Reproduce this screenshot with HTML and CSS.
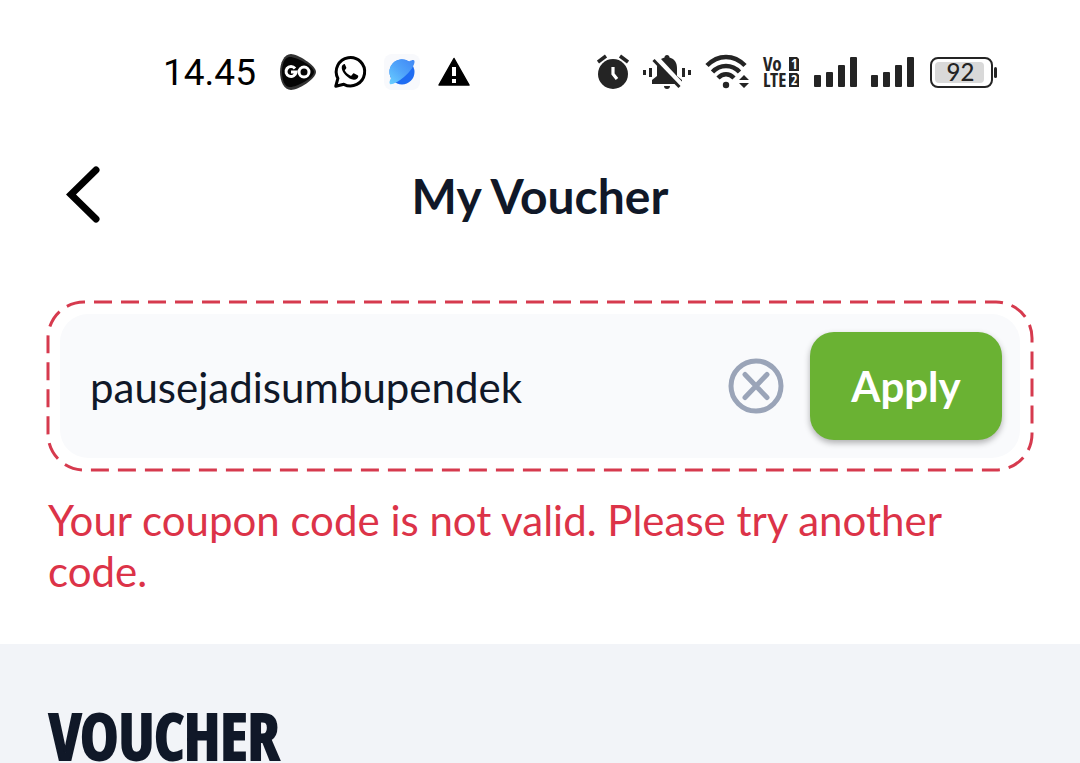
FILE: index.html
```html
<!DOCTYPE html>
<html lang="en">
<head>
  <meta charset="UTF-8">
  <title>My Voucher</title>
  <meta name="viewport" content="width=device-width, initial-scale=1.0">
  <link rel="stylesheet" href="styles.css">
</head>
<body>

  <div class="status-bar">
    <span class="clock">14.45</span>
    <div class="notifications">
      <svg width="36" height="36" viewBox="0 0 36 36">
        <path d="M11 0C17 0 36 11 36 18S18 36 11 36C4 36 0 27 0 18S4 0 11 0Z" fill="#333"/>
        <path d="M9 3C15 2 34 12 34 18S17 33 10 33C4 33 2 25 2 18S4 4 9 3Z" fill="#050505"/>
        <g fill="none" stroke="#fff" stroke-width="3">
          <path d="M15 14.500A5 5 0 1 0 16 18H11"/>
          <circle cx="24" cy="18" r="5"/>
        </g>
      </svg>
      <svg width="36" height="36" viewBox="-1 -1 38 38">
        <path d="M3 33l2.200-8.300A15 15 0 1 1 11.500 31z" fill="none" stroke="#000" stroke-width="3.200" stroke-linejoin="round"/>
        <path d="M12 9.500c-1.500.2-3 2-2.700 4.500.5 5 7 11.500 12.700 12.200 2.500.2 4.500-1.500 4.700-3.400.1-.9-.1-1.200-.7-1.500l-3.500-1.700c-.7-.3-1.100-.2-1.600.4l-1.300 1.600c-.4.5-.8.5-1.400.2-2.400-1.100-4.200-2.700-5.500-5-.3-.5-.2-.8.2-1.300l1-1.300c.3-.4.3-.7.1-1.200l-1.300-3c-.2-.5-.4-.6-.7-.5z" fill="#000"/>
      </svg>
      <svg width="36" height="36" viewBox="0 0 36 36">
        <defs>
          <linearGradient id="sky" x1="0" y1="1" x2="1" y2="0">
            <stop offset="0" stop-color="#6ad0ff"/>
            <stop offset=".5" stop-color="#50a4fa"/>
            <stop offset="1" stop-color="#3f86f5"/>
          </linearGradient>
        </defs>
        <rect width="36" height="36" rx="8" fill="#f8f9fc"/>
        <circle cx="18" cy="18" r="12.500" fill="#1f6cf2"/>
        <path d="M7 24A12.500 12.500 0 0 1 25 7.500C28 6 30 5.500 30.500 7 31 11 26 18 20 23 14 28 8 31 6 30 5 29 5.500 27 7 24Z" fill="url(#sky)"/>
      </svg>
      <svg width="36" height="36" viewBox="0 0 36 36">
        <path d="M18 4.500L33 31H3Z" fill="#000" stroke="#000" stroke-width="1.500" stroke-linejoin="round"/>
        <path d="M16 13h4v9h-4zM16 25h4v4h-4z" fill="#fff"/>
      </svg>
    </div>

    <div class="system">
      <svg width="32" height="36" viewBox="0 0 32 36">
        <circle cx="16" cy="20" r="15" fill="#242424"/>
        <path d="M1 8l8-6M31 8l-8-6" stroke="#242424" stroke-width="3.500"/>
        <path d="M16 13v7l4 5" fill="none" stroke="#fff" stroke-width="3.200"/>
      </svg>
      <svg width="48" height="36" viewBox="0 0 48 36">
        <path d="M24 1c1.500 0 2.500 1 2.500 2.500C32 5 34 9 34 14v8l5 4v4H9v-4l5-4v-8c0-5 2-9 7.500-10.500C21.500 2 22.500 1 24 1z" fill="#242424"/>
        <path d="M21 32h6c0 2-1.200 3-3 3s-3-1-3-3z" fill="#242424"/>
        <path d="M13 4l26 28" stroke="#fff" stroke-width="6"/>
        <path d="M10.500 6l26 27" stroke="#242424" stroke-width="3"/>
        <path d="M1.500 16v5M7.500 14v9M40.500 14v9M46.500 16v5" stroke="#242424" stroke-width="3"/>
      </svg>
      <svg width="44" height="36" viewBox="0 0 44 36">
        <g fill="none" stroke="#242424" stroke-width="4.500">
          <path d="M2 11.500C13 0 29 0 40 11.500"/>
          <path d="M7.500 18C15 10 27 10 34.500 18"/>
          <path d="M13 24C18 19 24 19 29 24"/>
        </g>
        <circle cx="21" cy="31" r="3.200" fill="#242424"/>
        <path d="M34 26l5-5 5 5zM34 29h10l-5 5z" fill="#242424"/>
      </svg>
      <svg class="volte" width="37" height="36" viewBox="0 0 37 36">
        <text x="0" y="17">Vo</text>
        <text x="0" y="33">LTE</text>
        <path d="M26 3h8l2 2v12H26zM26 19h8l2 2v12H26z" fill="#242424"/>
        <text class="sim" x="28" y="15">1</text>
        <text class="sim" x="28" y="31">2</text>
      </svg>
      <svg width="43" height="36" viewBox="0 0 43 36">
        <g fill="#242424">
          <rect x="0" y="21" width="7" height="12" rx="1"/>
          <rect x="12" y="18" width="7" height="15" rx="1"/>
          <rect x="24" y="11" width="7" height="22" rx="1"/>
          <rect x="36" y="3" width="7" height="30" rx="1"/>
        </g>
      </svg>
      <svg width="43" height="36" viewBox="0 0 43 36">
        <g fill="#242424">
          <rect x="0" y="21" width="7" height="12" rx="1"/>
          <rect x="12" y="18" width="7" height="15" rx="1"/>
          <rect x="24" y="11" width="7" height="22" rx="1"/>
          <rect x="36" y="3" width="7" height="30" rx="1"/>
        </g>
      </svg>
      <div class="battery"><span class="battery-level">92</span></div>
    </div>
  </div>

  <header class="header">
    <button class="back" type="button" aria-label="Back">
      <svg width="36" height="60" viewBox="0 0 36 60">
        <path d="M30 5L5 29.500 30 54" fill="none" stroke="#000" stroke-width="7" stroke-linecap="round"/>
      </svg>
    </button>
    <h1 class="title">My Voucher</h1>
  </header>

  <main>
    <form class="coupon">
      <div class="coupon-box">
        <svg class="dashes"><rect width="100%" height="100%" rx="36"/></svg>
        <div class="coupon-field">
          <input class="code" type="text" value="pausejadisumbupendek" aria-label="Coupon code" spellcheck="false">
          <button class="clear" type="button" aria-label="Clear">
            <svg width="56" height="56" viewBox="0 0 56 56">
              <g fill="none" stroke="#9aa4b8" stroke-width="5" stroke-linecap="round">
                <circle cx="28" cy="28" r="25"/>
                <path d="M17 16.500l22 23M39 16.500l-22 23"/>
              </g>
            </svg>
          </button>
          <button class="apply" type="submit">Apply</button>
        </div>
      </div>
      <p class="error">Your coupon code is not valid. Please try another code.</p>
    </form>

    <section class="vouchers">
      <h2 class="section-title">VOUCHER</h2>
    </section>
  </main>

</body>
</html>
```
FILE: styles.css
```css
* {
  box-sizing: border-box;
}

body {
  margin: 0;
  min-height: 100vh;
  display: flex;
  flex-direction: column;
  background: #ffffff;
  color: #101828;
  font-family: Lato, sans-serif;
}

svg {
  display: block;
  flex-shrink: 0;
}

button {
  border: none;
  background: none;
  padding: 0;
  font-family: inherit;
  cursor: pointer;
}

main {
  flex: 1;
  display: flex;
  flex-direction: column;
}

.status-bar {
  display: flex;
  align-items: center;
  height: 144px;
  padding: 0 83px 0 163px;
}

.clock {
  font-family: Roboto, sans-serif;
  font-size: 37px;
  color: #000000;
}

.notifications {
  display: flex;
  gap: 16px;
  margin-left: 24px;
}

.system {
  display: flex;
  align-items: center;
  gap: 14px;
  margin-left: auto;
}

.volte {
  overflow: visible;
  font: bold 19px "Open Sans Condensed", "Roboto Condensed", sans-serif;
  fill: #242424;
}

.sim {
  font-size: 14px;
  fill: #ffffff;
}

.battery {
  position: relative;
  width: 63px;
  height: 31px;
  margin: 0 4px 0 2px;
  padding: 3px;
  border: 2px solid #242424;
  border-radius: 8px;
}

.battery::after {
  content: "";
  position: absolute;
  top: 8px;
  right: -6px;
  width: 3px;
  height: 11px;
  border-radius: 2px;
  background: #242424;
}

.battery-level {
  display: block;
  width: 49px;
  height: 21px;
  padding-left: 2px;
  border-radius: 4px;
  background: #d9d9d9;
  color: #242424;
  font-size: 24px;
  font-weight: 500;
  line-height: 20px;
  text-align: center;
}

.header {
  display: grid;
  grid-template-columns: 48px 1fr 48px;
  align-items: center;
  height: 101px;
  padding: 0 66px;
}

.title {
  margin: 0;
  padding-top: 2px;
  font-size: 48px;
  font-weight: bold;
  text-align: center;
}

.coupon {
  padding: 57px 48px 47px;
}

.coupon-box {
  position: relative;
  padding: 12px;
}

.dashes {
  position: absolute;
  inset: 0;
  width: 100%;
  height: 100%;
  overflow: visible;
  pointer-events: none;
}

.dashes rect {
  fill: none;
  stroke: #d63a4e;
  stroke-width: 3px;
  stroke-dasharray: 18 9;
  stroke-dashoffset: 17px;
}

.coupon-field {
  display: flex;
  align-items: center;
  padding: 18px 18px 18px 30px;
  border-radius: 28px;
  background: #f9fafc;
}

.code {
  flex: 1;
  min-width: 0;
  padding: 2px 0 0;
  border: none;
  outline: none;
  background: transparent;
  color: #101828;
  font-family: inherit;
  font-size: 42px;
}

.apply {
  width: 192px;
  height: 108px;
  margin-left: 26px;
  border-radius: 24px;
  background: #6ab233;
  box-shadow: 0 3px 6px rgba(0, 0, 0, 0.3);
  color: #ffffff;
  font-size: 42px;
  font-weight: bold;
}

.error {
  margin: 25px 0 0;
  color: #dc3348;
  font-size: 42px;
  line-height: 51px;
}

.vouchers {
  flex: 1;
  padding: 64px 49px 0;
  background: #f2f4f8;
}

.section-title {
  margin: 0;
  font-family: "Open Sans Condensed", "Roboto Condensed", sans-serif;
  font-size: 64px;
  font-weight: 900;
  line-height: 55px;
  -webkit-text-stroke: 2px #101828;
}
```
